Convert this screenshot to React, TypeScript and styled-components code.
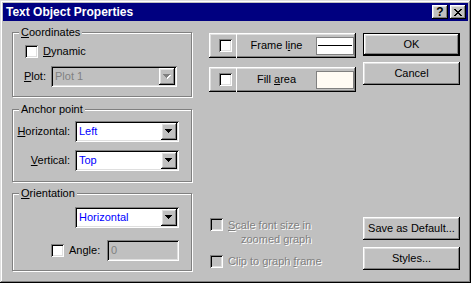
import React from "react";
import styled, { createGlobalStyle } from "styled-components";

const GlobalStyle = createGlobalStyle`
  html, body {
    margin: 0;
    padding: 0;
    background: #c0c0c0;
  }
  body {
    font-family: "Liberation Sans", Arial, sans-serif;
    font-size: 11px;
    line-height: 13px;
    color: #000;
  }
  * {
    box-sizing: border-box;
  }
`;

const raised = `
  box-shadow: inset -1px -1px #000, inset 1px 1px #fff,
    inset -2px -2px #808080, inset 2px 2px #dfdfdf;
`;
const sunken = `
  box-shadow: inset 1px 1px #808080, inset -1px -1px #fff,
    inset 2px 2px #000, inset -2px -2px #dfdfdf;
`;

const Window = styled.div`
  width: 471px;
  height: 283px;
  padding: 3px;
  background: #c0c0c0;
  box-shadow: inset -1px -1px #000, inset 1px 1px #dfdfdf,
    inset -2px -2px #808080, inset 2px 2px #fff;
  display: flex;
  flex-direction: column;
`;

const TitleBar = styled.div`
  height: 18px;
  background: #000080;
  color: #fff;
  display: flex;
  align-items: center;
  padding: 0 2px 0 3px;
  font-weight: bold;
  font-size: 12px;
`;

const Title = styled.span`
  flex: 1;
`;

const TitleButton = styled.div<{ $ml?: number }>`
  width: 16px;
  height: 14px;
  margin-left: ${(p) => p.$ml ?? 0}px;
  background: #c0c0c0;
  color: #000;
  display: flex;
  align-items: center;
  justify-content: center;
  font-weight: bold;
  font-size: 12px;
  ${raised}
`;

const Body = styled.div`
  flex: 1;
  display: flex;
  padding: 11px 8px 9px 9px;
`;

const Column = styled.div<{ $w: number; $ml?: number; $split?: boolean }>`
  width: ${(p) => p.$w}px;
  margin-left: ${(p) => p.$ml ?? 0}px;
  display: flex;
  flex-direction: column;
  justify-content: ${(p) => (p.$split ? "space-between" : "flex-start")};
`;

const Stack = styled.div<{ $mb?: number }>`
  display: flex;
  flex-direction: column;
  margin-bottom: ${(p) => p.$mb ?? 0}px;
`;

const Group = styled.div<{ $h: number; $pt: number; $mt?: number }>`
  position: relative;
  height: ${(p) => p.$h}px;
  margin-top: ${(p) => p.$mt ?? 0}px;
  border: 1px solid #808080;
  box-shadow: inset 1px 1px #fff, 1px 1px #fff;
  padding-top: ${(p) => p.$pt}px;
`;

const Legend = styled.span`
  position: absolute;
  top: -7px;
  left: 6px;
  padding: 0 2px;
  background: #c0c0c0;
`;

const Row = styled.div<{ $mt?: number; $ml?: number; $top?: boolean }>`
  display: flex;
  align-items: ${(p) => (p.$top ? "flex-start" : "center")};
  margin-top: ${(p) => p.$mt ?? 0}px;
  margin-left: ${(p) => p.$ml ?? 0}px;
`;

const FieldLabel = styled.span<{ $w: number }>`
  width: ${(p) => p.$w}px;
  text-align: right;
  padding-right: 5px;
  white-space: nowrap;
`;

const CheckLabel = styled.span<{ $w?: number; $disabled?: boolean }>`
  margin-left: 5px;
  width: ${(p) => (p.$w ? `${p.$w}px` : "auto")};
  white-space: nowrap;
  color: ${(p) => (p.$disabled ? "#808080" : "#000")};
  text-shadow: ${(p) => (p.$disabled ? "1px 1px 0 #fff" : "none")};
`;

const TwoLine = styled.span`
  margin-left: 5px;
  color: #808080;
  text-shadow: 1px 1px 0 #fff;
  line-height: 14px;
  display: flex;
  flex-direction: column;
`;

const Indent = styled.span`
  padding-left: 13px;
`;

const Check = styled.span<{ $disabled?: boolean }>`
  width: 13px;
  height: 13px;
  flex: none;
  background: ${(p) => (p.$disabled ? "#c0c0c0" : "#fff")};
  ${sunken}
`;

const Combo = styled.div<{ $w: number; $disabled?: boolean }>`
  width: ${(p) => p.$w}px;
  height: 21px;
  padding: 2px;
  display: flex;
  background: ${(p) => (p.$disabled ? "#c0c0c0" : "#fff")};
  ${sunken}
`;

const ComboValue = styled.span<{ $disabled?: boolean }>`
  flex: 1;
  padding-left: 2px;
  line-height: 17px;
  color: ${(p) => (p.$disabled ? "#808080" : "#0000ff")};
`;

const ArrowButton = styled.span`
  width: 16px;
  height: 17px;
  background: #c0c0c0;
  display: flex;
  align-items: center;
  justify-content: center;
  ${raised}
`;

const Edit = styled.div<{ $w: number }>`
  width: ${(p) => p.$w}px;
  height: 21px;
  padding: 2px 4px;
  line-height: 17px;
  color: #808080;
  background: #c0c0c0;
  ${sunken}
`;

const PropButton = styled.div<{ $mt: number }>`
  height: 25px;
  margin-top: ${(p) => p.$mt}px;
  display: flex;
  align-items: center;
  background: #c0c0c0;
  ${raised}
`;

const CheckCell = styled.div`
  width: 28px;
  align-self: stretch;
  display: flex;
  align-items: center;
  padding-left: 10px;
  border-right: 1px solid #fff;
`;

const PropLabel = styled.span`
  flex: 1;
  text-align: center;
`;

const Swatch = styled.span<{ $fill: string; $line?: boolean }>`
  position: relative;
  width: 38px;
  height: 18px;
  margin-right: 2px;
  border: 1px solid #808080;
  background: ${(p) => p.$fill};

  &::after {
    content: "";
    display: ${(p) => (p.$line ? "block" : "none")};
    position: absolute;
    left: 1px;
    right: 1px;
    top: 7px;
    height: 1px;
    background: #000;
  }
`;

const PushButton = styled.div<{ $default?: boolean; $mt?: number }>`
  height: 23px;
  margin-top: ${(p) => p.$mt ?? 0}px;
  display: flex;
  align-items: center;
  justify-content: center;
  background: #c0c0c0;
  border: ${(p) => (p.$default ? "1px solid #000" : "none")};
  ${raised}
`;

function Arrow({ disabled }: { disabled?: boolean }) {
  const d = "M0 0h7v1H0z M1 1h5v1H1z M2 2h3v1H2z M3 3h1v1H3z";
  return (
    <svg width="8" height="5" viewBox="0 0 8 5" shapeRendering="crispEdges">
      {disabled && <path d={d} fill="#fff" transform="translate(1 1)" />}
      <path d={d} fill={disabled ? "#808080" : "#000"} />
    </svg>
  );
}

function CloseGlyph() {
  return (
    <svg width="8" height="7" viewBox="0 0 8 7" shapeRendering="crispEdges">
      <path
        d="M0 0h2v1H0z M6 0h2v1H6z M1 1h2v1H1z M5 1h2v1H5z M2 2h4v1H2z M3 3h2v1H3z M2 4h4v1H2z M1 5h2v1H1z M5 5h2v1H5z M0 6h2v1H0z M6 6h2v1H6z"
        fill="#000"
      />
    </svg>
  );
}

function ComboBox({ w, value, disabled }: { w: number; value: string; disabled?: boolean }) {
  return (
    <Combo $w={w} $disabled={disabled}>
      <ComboValue $disabled={disabled}>{value}</ComboValue>
      <ArrowButton>
        <Arrow disabled={disabled} />
      </ArrowButton>
    </Combo>
  );
}

export default function App() {
  return (
    <>
      <GlobalStyle />
      <Window>
        <TitleBar>
          <Title>Text Object Properties</Title>
          <TitleButton>?</TitleButton>
          <TitleButton $ml={2}>
            <CloseGlyph />
          </TitleButton>
        </TitleBar>
        <Body>
          <Column $w={180}>
            <Group $h={65} $pt={12}>
              <Legend>
                <u>C</u>oordinates
              </Legend>
              <Row $ml={12}>
                <Check />
                <CheckLabel>
                  <u>D</u>ynamic
                </CheckLabel>
              </Row>
              <Row $mt={8}>
                <FieldLabel $w={38}>
                  <u>P</u>lot:
                </FieldLabel>
                <ComboBox w={126} value="Plot 1" disabled />
              </Row>
            </Group>
            <Group $h={73} $pt={11} $mt={12}>
              <Legend>Anchor point</Legend>
              <Row>
                <FieldLabel $w={62}>
                  <u>H</u>orizontal:
                </FieldLabel>
                <ComboBox w={104} value="Left" />
              </Row>
              <Row $mt={8}>
                <FieldLabel $w={62}>
                  <u>V</u>ertical:
                </FieldLabel>
                <ComboBox w={104} value="Top" />
              </Row>
            </Group>
            <Group $h={78} $pt={13} $mt={11}>
              <Legend>
                <u>O</u>rientation
              </Legend>
              <Row>
                <FieldLabel $w={62} />
                <ComboBox w={104} value="Horizontal" />
              </Row>
              <Row $mt={12} $ml={38}>
                <Check />
                <CheckLabel $w={38}>Angle:</CheckLabel>
                <Edit $w={72}>0</Edit>
              </Row>
            </Group>
          </Column>

          <Column $w={147} $ml={17} $split>
            <Stack>
              <PropButton $mt={1}>
                <CheckCell>
                  <Check />
                </CheckCell>
                <PropLabel>
                  Frame l<u>i</u>ne
                </PropLabel>
                <Swatch $fill="#fff" $line />
              </PropButton>
              <PropButton $mt={9}>
                <CheckCell>
                  <Check />
                </CheckCell>
                <PropLabel>
                  Fill <u>a</u>rea
                </PropLabel>
                <Swatch $fill="#fffbf4" />
              </PropButton>
            </Stack>
            <Stack $mb={3}>
              <Row $ml={1} $top>
                <Check $disabled />
                <TwoLine>
                  <span>
                    <u>S</u>cale font size in
                  </span>
                  <Indent>zoomed graph</Indent>
                </TwoLine>
              </Row>
              <Row $ml={1} $mt={9}>
                <Check $disabled />
                <CheckLabel $disabled>
                  Clip to graph <u>f</u>rame
                </CheckLabel>
              </Row>
            </Stack>
          </Column>

          <Column $w={97} $ml={7} $split>
            <Stack>
              <PushButton $default $mt={1}>
                OK
              </PushButton>
              <PushButton $mt={6}>Cancel</PushButton>
            </Stack>
            <Stack $mb={1}>
              <PushButton>Save as Default...</PushButton>
              <PushButton $mt={7}>Styles...</PushButton>
            </Stack>
          </Column>
        </Body>
      </Window>
    </>
  );
}
